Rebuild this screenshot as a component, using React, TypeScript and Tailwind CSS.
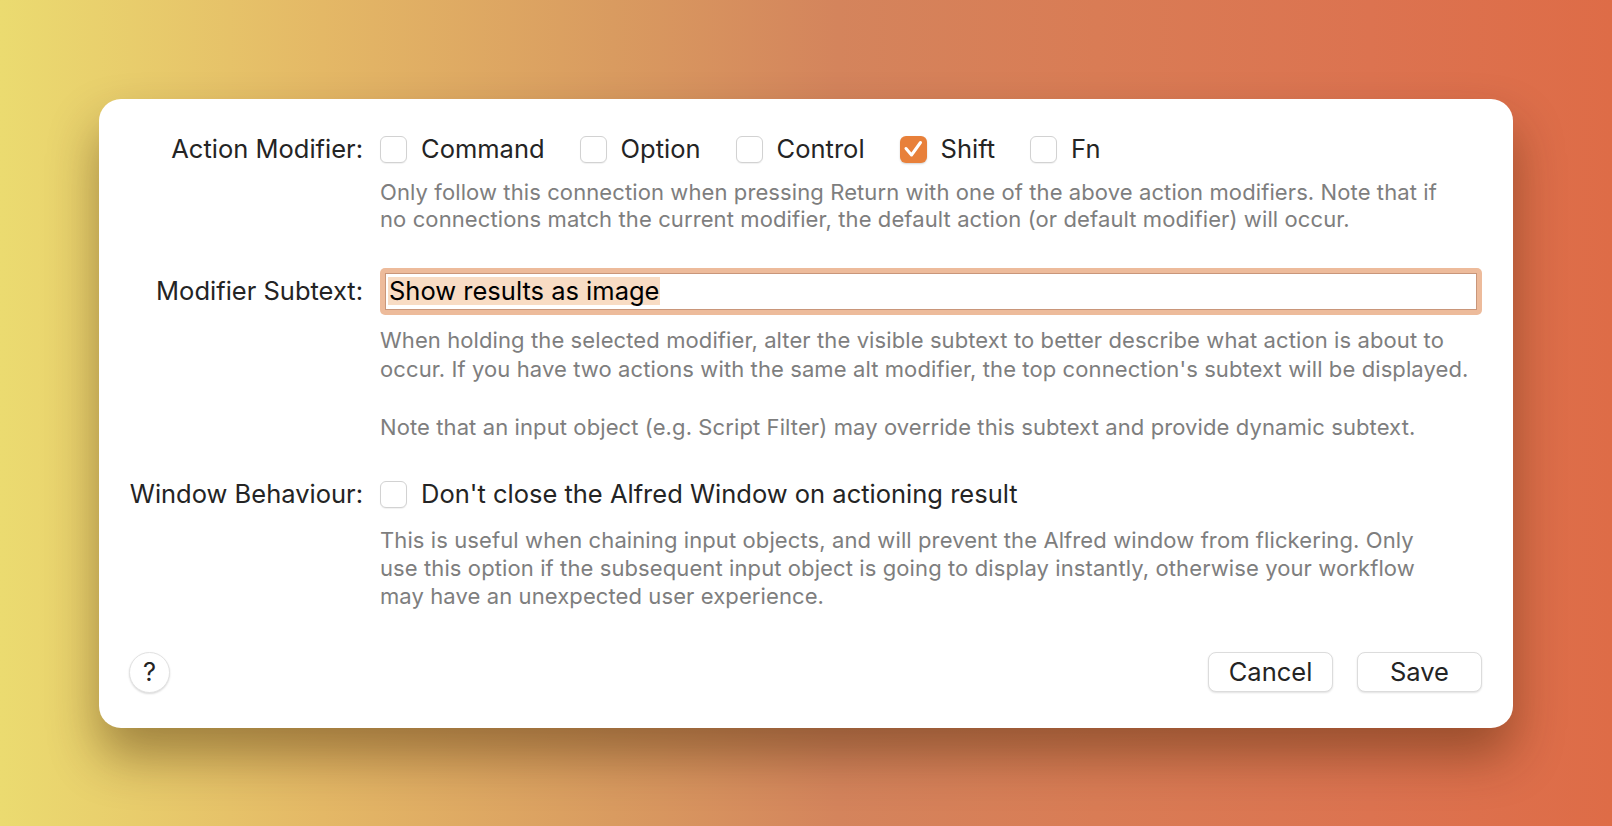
import React from "react";

function Box({ checked }: { checked?: boolean }) {
  if (checked) {
    return (
      <span className="w-[27px] h-[27px] shrink-0 rounded-[6px] bg-[#e8803a] flex items-center justify-center shadow-[0_1px_2px_rgba(0,0,0,0.18)]">
        <svg width="27" height="27" viewBox="0 0 27 27">
          <path d="M6 12.5 L11.5 19 L20.5 6.5" fill="none" stroke="white" strokeWidth="3" strokeLinecap="round" strokeLinejoin="round" />
        </svg>
      </span>
    );
  }
  return (
    <span className="w-[27px] h-[27px] shrink-0 rounded-[6px] bg-white border border-[#d2d2d2] shadow-[0_1px_1px_rgba(0,0,0,0.06)]" />
  );
}

function Check({ label, checked }: { label: string; checked?: boolean }) {
  return (
    <div className="flex items-center gap-[14px]">
      <Box checked={checked} />
      <span>{label}</span>
    </div>
  );
}

export default function App() {
  return (
    <div className="w-[1612px] h-[826px] flex items-center justify-center bg-[linear-gradient(to_right,#ebdb70_0%,#e4b866_20%,#d99b60_38%,#d4845c_52%,#d97c55_68%,#dc7350_85%,#de6c47_100%)] font-['Inter','Liberation_Sans',sans-serif]">
      <div className="w-[1414px] h-[629px] bg-white rounded-[22px] shadow-[0_28px_50px_rgba(60,30,0,0.42)] flex flex-col pr-[31px] text-[#242424]">
        <div className="grid grid-cols-[264px_1fr] gap-x-[17px] pt-[37px] text-[25.5px]">
          {/* Row 1 */}
          <div className="h-[28px] flex items-center justify-end">Action Modifier:</div>
          <div className="h-[28px] flex items-center gap-[35px]">
            <Check label="Command" />
            <Check label="Option" />
            <Check label="Control" />
            <Check label="Shift" checked />
            <Check label="Fn" />
          </div>
          <div />
          <div className="mt-[15px] text-[22px] tracking-[0.1px] leading-[27px] text-[#7e7e7e] whitespace-nowrap">
            Only follow this connection when pressing Return with one of the above action modifiers. Note that if
            <br />
            no connections match the current modifier, the default action (or default modifier) will occur.
          </div>

          {/* Row 2 */}
          <div className="mt-[35px] h-[47px] flex items-center justify-end">Modifier Subtext:</div>
          <div className="mt-[35px] h-[47px] rounded-[5px] bg-[#edbb9b] p-[5px]">
            <div className="h-full bg-white border border-[#c9967a] flex items-center pl-[2px]">
              <span className="bg-[#f8dcc4] text-black px-[1px] leading-[28px]">Show results as image</span>
            </div>
          </div>
          <div />
          <div className="mt-[11px] text-[22px] tracking-[0.1px] leading-[29px] text-[#7e7e7e] whitespace-nowrap">
            When holding the selected modifier, alter the visible subtext to better describe what action is about to
            <br />
            occur. If you have two actions with the same alt modifier, the top connection's subtext will be displayed.
            <br />
            <br />
            Note that an input object (e.g. Script Filter) may override this subtext and provide dynamic subtext.
          </div>

          {/* Row 3 */}
          <div className="mt-[39px] h-[28px] flex items-center justify-end">Window Behaviour:</div>
          <div className="mt-[39px] h-[28px] flex items-center">
            <Check label="Don't close the Alfred Window on actioning result" />
          </div>
          <div />
          <div className="mt-[17px] text-[22px] tracking-[0.1px] leading-[28px] text-[#7e7e7e] whitespace-nowrap">
            This is useful when chaining input objects, and will prevent the Alfred window from flickering. Only
            <br />
            use this option if the subsequent input object is going to display instantly, otherwise your workflow
            <br />
            may have an unexpected user experience.
          </div>
        </div>

        {/* Footer */}
        <div className="mt-auto mb-[35px] pl-[30px] flex items-center text-[25.5px]">
          <button className="w-[41px] h-[41px] rounded-full bg-white border border-[#e2e2e2] shadow-[0_1px_2px_rgba(0,0,0,0.15)] flex items-center justify-center text-[#242424]">
            ?
          </button>
          <div className="ml-auto flex gap-[24px]">
            <button className="w-[125px] h-[40px] rounded-[8px] bg-white border border-[#dcdcdc] shadow-[0_1px_2px_rgba(0,0,0,0.12)] text-[#242424]">
              Cancel
            </button>
            <button className="w-[125px] h-[40px] rounded-[8px] bg-white border border-[#dcdcdc] shadow-[0_1px_2px_rgba(0,0,0,0.12)] text-[#242424]">
              Save
            </button>
          </div>
        </div>
      </div>
    </div>
  );
}
